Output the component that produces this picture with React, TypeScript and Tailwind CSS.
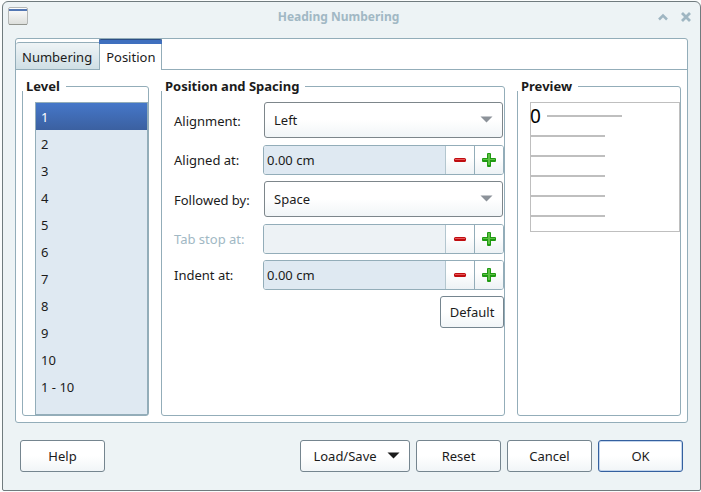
import { useState } from "react";
import type { ReactNode } from "react";

const levels = ["1", "2", "3", "4", "5", "6", "7", "8", "9", "10", "1 - 10"];

function Group({ title, children }: { title: string; children: ReactNode }) {
  return (
    <fieldset className="min-w-0 rounded-[3px] border border-[#93adb9] pl-3 pt-[11px]">
      <legend className="-ml-[13px] bg-white pl-1 pr-[6px] text-[13px] leading-[9px] font-bold whitespace-nowrap">
        {title}
      </legend>
      {children}
    </fieldset>
  );
}

function DropDown({ id, label, options }: { id: string; label: string; options: string[] }) {
  return (
    <div className="flex h-[37px] items-start">
      <label htmlFor={id} className="w-[89px] shrink-0 leading-[38px]">
        {label}
      </label>
      <div className="relative mx-px h-9 min-w-0 flex-1">
        <select
          id={id}
          className="h-full w-full appearance-none rounded-[3px] border border-[#7d868b] bg-linear-to-b from-white from-50% to-[#f1f5f7] px-[9px] outline-none"
        >
          {options.map((o) => (
            <option key={o}>{o}</option>
          ))}
        </select>
        <svg className="pointer-events-none absolute top-[14px] right-[10px]" width="13" height="7" viewBox="0 0 13 7">
          <path d="M0.500 0.500H12.500L6.500 6.500Z" fill="#8c9299" />
        </svg>
      </div>
    </div>
  );
}

function Spin({ id, label, value, disabled }: { id: string; label: string; value: string; disabled?: boolean }) {
  return (
    <div className="flex h-[30px] items-center">
      <label htmlFor={id} className={`w-[89px] shrink-0 ${disabled ? "text-[#a1b8c4]" : ""}`}>
        {label}
      </label>
      <div className="flex h-full min-w-0 flex-1 overflow-hidden rounded-[3px] border border-[#93adb9]">
        <input
          id={id}
          type="text"
          defaultValue={value}
          disabled={disabled}
          className={`min-w-0 flex-1 px-[3px] outline-none ${disabled ? "bg-[#edf2f5]" : "bg-[#dfe9f2]"}`}
        />
        <button
          type="button"
          aria-label={`Decrease ${label}`}
          className="flex w-[29px] items-center justify-center border-l border-[#b3c6cf] bg-linear-to-b from-white from-40% to-[#edf2f5]"
        >
          <svg width="14" height="14" viewBox="0 0 14 14">
            <rect x="1" y="5" width="12" height="4" rx="1.500" fill="#bf0d10" />
            <rect x="2" y="6" width="10" height="1" fill="#e85557" />
          </svg>
        </button>
        <button
          type="button"
          aria-label={`Increase ${label}`}
          className="flex w-[29px] items-center justify-center border-l border-[#93adb9] bg-linear-to-b from-white from-40% to-[#edf2f5]"
        >
          <svg width="14" height="14" viewBox="0 0 14 14">
            <path
              d="M6 0H8Q9 0 9 1V5H13Q14 5 14 6V8Q14 9 13 9H9V13Q9 14 8 14H6Q5 14 5 13V9H1Q0 9 0 8V6Q0 5 1 5H5V1Q5 0 6 0Z"
              fill="#1f9a12"
            />
            <path d="M6 1H8V6H13V7H8V12H6V7H1V6H6Z" fill="#5cc043" />
          </svg>
        </button>
      </div>
    </div>
  );
}

function Button({ children, width, primary }: { children: ReactNode; width: string; primary?: boolean }) {
  return (
    <button
      type="button"
      className={`flex h-8 items-center justify-center rounded-[3px] border bg-linear-to-b from-white from-50% to-[#f1f5f7] ${width} ${
        primary ? "border-[#34609f] inset-ring inset-ring-[#c3d5ec]" : "border-[#75858f]"
      }`}
    >
      {children}
    </button>
  );
}

export default function App() {
  const [level, setLevel] = useState("1");
  return (
    <div className="bg-[#fafcfc] pt-px pb-px pl-[2px] font-['Noto_Sans',sans-serif] text-[13px] leading-[18px] text-[#1b1b1b]">
      <div role="dialog" aria-labelledby="title" className="rounded-t-[6px] rounded-b-[2px] border border-[#707b7e] bg-[#edf3f5]">
        <header className="flex h-9 items-center justify-between pr-[9px] pb-[7px] pl-[5px] text-[#a1b8c4]">
          <svg width="38" height="19" viewBox="0 0 38 19">
            <defs>
              <linearGradient id="win" x1="0" y1="0" x2="0" y2="1">
                <stop offset="0" stopColor="#ffffff" />
                <stop offset="1" stopColor="#dcdedb" />
              </linearGradient>
            </defs>
            <rect x="0.500" y="0.500" width="19" height="17" rx="1.500" fill="url(#win)" stroke="#b4b7b6" />
            <rect x="1" y="2" width="18" height="2" fill="#5377b3" />
            <path d="M1 17.500H19" stroke="#92958f" />
          </svg>
          <h1 id="title" className="text-[12px] font-bold">
            Heading Numbering
          </h1>
          <div className="flex w-[60px] items-center justify-end gap-[13px]">
            <button type="button" aria-label="Roll up">
              <svg width="10" height="10" viewBox="0 0 10 10">
                <path d="M1 7.500L5 3.500L9 7.500" fill="none" stroke="#9fb6c2" strokeWidth="2.500" />
              </svg>
            </button>
            <button type="button" aria-label="Close">
              <svg width="10" height="10" viewBox="0 0 10 10">
                <path d="M1 1L9 9M9 1L1 9" fill="none" stroke="#9fb6c2" strokeWidth="2.800" />
              </svg>
            </button>
          </div>
        </header>

        <main className="mx-3 rounded-[3px] border border-[#93adb9] bg-white">
          <div role="tablist" className="flex h-[31px] items-end border-b border-[#93adb9]">
            <button
              type="button"
              role="tab"
              aria-selected="false"
              className="h-[27px] rounded-tl-[3px] border-t border-[#93adb9] bg-linear-to-b from-[#eff4f6] to-[#cfdfe5] pr-[7px] pl-[6px] pt-[2px]"
            >
              Numbering
            </button>
            <button
              type="button"
              role="tab"
              aria-selected="true"
              className="relative -mb-px h-[31px] border-x border-[#93adb9] bg-white px-[6px] pt-[5px]"
            >
              <span className="absolute top-0 -right-px -left-px h-[5px] rounded-t-[2px] border-t border-[#2d4f85] bg-[#3f6fbe]" />
              Position
            </button>
          </div>

          <div role="tabpanel" className="grid grid-cols-[127px_1fr_164px] gap-3 px-[6px] pt-3 pb-[6px]">
            <Group title="Level">
              <ul role="listbox" aria-label="Level" className="border border-[#93adb9] bg-[#dfe9f2] pb-[14px]">
                {levels.map((l) => (
                  <li key={l} role="presentation">
                    <button
                      type="button"
                      role="option"
                      aria-selected={l === level}
                      onClick={() => setLevel(l)}
                      className={`block h-[27px] w-full px-[5px] pt-px text-left ${
                        l === level ? "bg-linear-to-b from-[#4577c9] to-[#3b60a0] text-white" : ""
                      }`}
                    >
                      {l}
                    </button>
                  </li>
                ))}
              </ul>
            </Group>

            <Group title="Position and Spacing">
              <div className="flex flex-col gap-[6px]">
                <DropDown id="alignment" label="Alignment:" options={["Left", "Centered", "Right"]} />
                <Spin id="aligned" label="Aligned at:" value="0.00 cm" />
                <DropDown id="followed" label="Followed by:" options={["Space", "Tab stop", "Nothing"]} />
                <Spin id="tabstop" label="Tab stop at:" value="" disabled />
                <Spin id="indent" label="Indent at:" value="0.00 cm" />
                <div className="flex justify-end">
                  <Button width="w-16">Default</Button>
                </div>
              </div>
            </Group>

            <Group title="Preview">
              <svg width="150" height="130" viewBox="0 0 150 130" role="img" aria-label="Numbering preview">
                <rect x="0.500" y="0.500" width="149" height="129" fill="#fff" stroke="#bfbfbf" />
                <text x="0" y="21" fontSize="19" fill="#000" className="font-['Noto_Sans',sans-serif]">
                  0
                </text>
                <rect x="17" y="13" width="75" height="2" fill="#bfbfbf" />
                {[33, 53, 73, 93, 113].map((y) => (
                  <rect key={y} x="0" y={y} width="75" height="2" fill="#bfbfbf" />
                ))}
              </svg>
            </Group>
          </div>
        </main>

        <footer className="flex gap-[6px] px-[17px] pt-[17px] pb-[18px]">
          <Button width="w-[85px] mr-auto">Help</Button>
          <Button width="w-[110px] pl-[3px]">
            Load/Save
            <svg className="ml-[10px]" width="13" height="8" viewBox="0 0 13 8">
              <path d="M0.500 0.500H12.500L6.500 6.500Z" fill="#1b1b1b" />
            </svg>
          </Button>
          <Button width="w-[85px]">Reset</Button>
          <Button width="w-[85px]">Cancel</Button>
          <Button width="w-[85px]" primary>
            OK
          </Button>
        </footer>
      </div>
    </div>
  );
}
